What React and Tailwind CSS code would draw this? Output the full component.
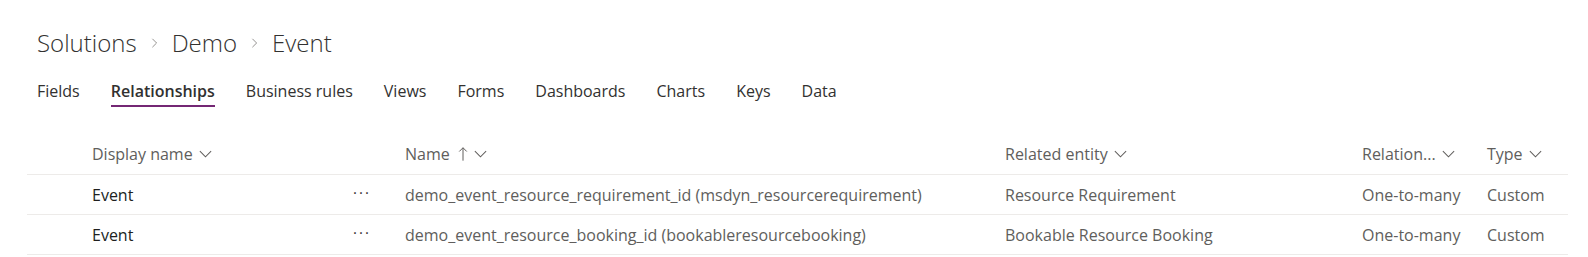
const tabs = ['Fields', 'Relationships', 'Business rules', 'Views', 'Forms', 'Dashboards', 'Charts', 'Keys', 'Data'];

const rows = [
  { display: 'Event', name: 'demo_event_resource_requirement_id (msdyn_resourcerequirement)', related: 'Resource Requirement', relation: 'One-to-many', type: 'Custom' },
  { display: 'Event', name: 'demo_event_resource_booking_id (bookableresourcebooking)', related: 'Bookable Resource Booking', relation: 'One-to-many', type: 'Custom' },
];

const cols = 'grid grid-cols-[65px_261px_52px_600px_357px_125px_1fr]';

function Chevron({ className = '' }) {
  return (
    <svg viewBox="0 0 16 16" className={`w-[15px] h-[15px] ${className}`} fill="none" stroke="currentColor" strokeWidth="1.1">
      <path d="M2 5.5l6 6 6-6" />
    </svg>
  );
}

function BreadChevron() {
  return (
    <svg viewBox="0 0 10 16" className="w-[7px] h-[12px] text-[#8a8886] mx-[14px]" fill="none" stroke="currentColor" strokeWidth="1.3">
      <path d="M2 2l6 6-6 6" />
    </svg>
  );
}

function UpArrow() {
  return (
    <svg viewBox="0 0 12 18" className="w-[10px] h-[16px] ml-[8px] text-[#605e5c]" fill="none" stroke="currentColor" strokeWidth="1.2">
      <path d="M6 17V1.5M1.5 6L6 1.5 10.5 6" />
    </svg>
  );
}

function HeaderCell({ children, sort }) {
  return (
    <div className="flex items-center text-[#605e5c]">
      <span>{children}</span>
      {sort && <UpArrow />}
      <Chevron className="ml-[5px]" />
    </div>
  );
}

export default function App() {
  return (
    <div className="w-[1588px] h-[257px] bg-white overflow-hidden" style={{ fontFamily: '"Open Sans", "Noto Sans", sans-serif' }}>
      <div className="pl-[37px] pt-[25px] flex items-center text-[24px] font-light text-[#323130] leading-[36px]">
        <span>Solutions</span>
        <BreadChevron />
        <span>Demo</span>
        <BreadChevron />
        <span>Event</span>
      </div>

      <div className="pl-[37px] mt-[18px] flex gap-[31px] text-[16px] text-[#323130]">
        {tabs.map((t) => (
          <div key={t} className="flex flex-col">
            <span className={`leading-[24px] ${t === 'Relationships' ? 'font-semibold' : ''}`}>{t}</span>
            <div className={`h-[2px] mt-[2px] ${t === 'Relationships' ? 'bg-[#742774]' : ''}`} />
          </div>
        ))}
      </div>

      <div className="ml-[27px] mr-[20px] mt-[26px] text-[16px]">
        <div className={`${cols} h-[42px] items-center border-b border-[#edebe9]`}>
          <div />
          <HeaderCell>Display name</HeaderCell>
          <div />
          <HeaderCell sort>Name</HeaderCell>
          <HeaderCell>Related entity</HeaderCell>
          <HeaderCell>Relation...</HeaderCell>
          <HeaderCell>Type</HeaderCell>
        </div>
        {rows.map((r) => (
          <div key={r.name} className={`${cols} h-[40px] items-center border-b border-[#edebe9] text-[#605e5c]`}>
            <div />
            <div className="text-[#201f1e]">{r.display}</div>
            <div className="text-[#323130] tracking-[2px] text-[15px] -mt-[4px]">···</div>
            <div className="whitespace-nowrap">{r.name}</div>
            <div>{r.related}</div>
            <div>{r.relation}</div>
            <div>{r.type}</div>
          </div>
        ))}
      </div>
    </div>
  );
}
